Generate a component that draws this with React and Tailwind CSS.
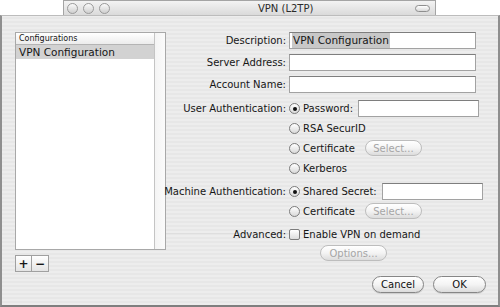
import React from "react";

function Radio({ checked }) {
  return (
    <span className="w-[11px] h-[11px] rounded-full border border-[#7c7c7c] bg-gradient-to-b from-white to-[#d9d9d9] flex items-center justify-center shrink-0">
      {checked && <span className="w-[4px] h-[4px] rounded-full bg-[#111]" />}
    </span>
  );
}

function Field({ className = "", children }) {
  return (
    <div className={"h-[17px] bg-white border border-[#a2a2a2] border-t-[#7e7e7e] flex items-center px-[2px] " + className}>
      {children}
    </div>
  );
}

function Pill({ disabled, className = "", children }) {
  return (
    <div
      className={
        "h-[16px] rounded-full border flex items-center justify-center bg-gradient-to-b from-white via-[#f4f4f4] to-[#dcdcdc] " +
        (disabled ? "border-[#bdbdbd] text-[#a5a5a5] " : "border-[#868686] text-[#111] shadow-[0_1px_0_#cfcfcf] ") +
        className
      }
    >
      {children}
    </div>
  );
}

function Label({ children }) {
  return <div className="w-[123px] text-right pr-[3px] shrink-0 whitespace-nowrap flex justify-end">{children}</div>;
}

export default function App() {
  return (
    <div className="w-[500px] h-[307px] bg-white overflow-hidden text-[10px] text-[#161616] font-['DejaVu_Sans','Liberation_Sans',sans-serif]">
      {/* back window title bar */}
      <div className="ml-[63px] w-[373px] h-[15px] border border-b-0 border-[#a4a4a4] bg-gradient-to-b from-[#f3f3f3] to-[#dadada] flex items-center">
        <div className="ml-[3px] flex gap-[5px]">
          {[0, 1, 2].map((i) => (
            <span key={i} className="w-[11px] h-[11px] rounded-full border border-[#9a9a9a] bg-gradient-to-b from-[#fafafa] to-[#cfcfcf]" />
          ))}
        </div>
        <div className="ml-[148px] text-[#2a2a2a]">VPN (L2TP)</div>
        <div className="flex-1" />
        <span className="mr-[5px] w-[15px] h-[7px] rounded-full border border-[#8e8e8e] bg-gradient-to-b from-white to-[#d8d8d8]" />
      </div>

      {/* sheet */}
      <div className="relative h-[292px] border-t border-t-[#bcbcbc] border-x-2 border-b-2 border-x-[#8f8f8f] border-b-[#7f7f7f] bg-[repeating-linear-gradient(0deg,#ededed_0px,#ededed_2px,#e7e7e7_2px,#e7e7e7_4px)] flex">
        {/* faint line of the window underneath */}
        <div className="absolute left-[164px] top-[217px] w-[126px] h-px bg-[#dedede]" />

        {/* left column */}
        <div className="pl-[13px] pt-[16px] flex flex-col">
          <div className="w-[151px] h-[218px] border border-[#a8a8a8] bg-white flex">
            <div className="flex-1 flex flex-col">
              <div className="h-[12px] border-b border-[#b4b4b4] bg-gradient-to-b from-white to-[#ececec] text-[8px] leading-[11px] pl-[3px]">
                Configurations
              </div>
              <div className="h-[14px] bg-[#d2d2d2] leading-[14px] pl-[3px] text-[10.5px]">VPN Configuration</div>
            </div>
            <div className="w-[11px] border-l border-[#c4c4c4] bg-gradient-to-r from-[#f4f4f4] to-[#fbfbfb]" />
          </div>
          <div className="mt-[5px] flex w-[34px] h-[17px] border border-[#a0a0a0] bg-gradient-to-b from-white to-[#e4e4e4]">
            <div className="w-[16px] border-r border-[#a0a0a0] flex items-center justify-center text-[12px] font-bold leading-none">+</div>
            <div className="flex-1 flex items-center justify-center text-[12px] font-bold leading-none">−</div>
          </div>
        </div>

        {/* right column: form */}
        <div className="relative flex-1 pt-[16px] flex flex-col">
          <div className="flex items-center h-[17px]">
            <Label>Description:</Label>
            <Field className="w-[187px]">
              <span className="bg-[#c8c8c8] px-[1px] text-[10.5px]">VPN Configuration</span>
            </Field>
          </div>
          <div className="mt-[5px] flex items-center h-[17px]">
            <Label>Server Address:</Label>
            <Field className="w-[187px]" />
          </div>
          <div className="mt-[5px] flex items-center h-[17px]">
            <Label>Account Name:</Label>
            <Field className="w-[187px]" />
          </div>

          <div className="mt-[7px] flex items-center h-[17px]">
            <Label>User Authentication:</Label>
            <Radio checked />
            <span className="ml-[3px]">Password:</span>
            <Field className="ml-[5px] w-[121px]" />
          </div>
          <div className="mt-[1px] flex items-center h-[20px]">
            <Label />
            <Radio />
            <span className="ml-[3px]">RSA SecurID</span>
          </div>
          <div className="flex items-center h-[20px]">
            <Label />
            <Radio />
            <span className="ml-[3px]">Certificate</span>
            <Pill disabled className="ml-[10px] w-[57px]">Select...</Pill>
          </div>
          <div className="flex items-center h-[20px]">
            <Label />
            <Radio />
            <span className="ml-[3px]">Kerberos</span>
          </div>

          <div className="mt-[5px] flex items-center h-[17px]">
            <Label>Machine Authentication:</Label>
            <Radio checked />
            <span className="ml-[3px]">Shared Secret:</span>
            <Field className="ml-[5px] w-[101px]" />
          </div>
          <div className="mt-[1px] flex items-center h-[20px]">
            <Label />
            <Radio />
            <span className="ml-[3px]">Certificate</span>
            <Pill disabled className="ml-[10px] w-[57px]">Select...</Pill>
          </div>

          <div className="mt-[3px] flex items-center h-[20px]">
            <Label>Advanced:</Label>
            <span className="w-[11px] h-[11px] rounded-[2px] border border-[#7c7c7c] bg-gradient-to-b from-white to-[#dcdcdc] shrink-0" />
            <span className="ml-[3px]">Enable VPN on demand</span>
          </div>
          <div className="mt-[1px] flex">
            <div className="w-[154px]" />
            <Pill disabled className="w-[67px]">Options...</Pill>
          </div>

          <div className="mt-[15px] flex justify-end gap-[9px] pr-[12px]">
            <Pill className="w-[52px] h-[17px]">Cancel</Pill>
            <Pill className="w-[53px] h-[17px]">OK</Pill>
          </div>
        </div>
      </div>
    </div>
  );
}
